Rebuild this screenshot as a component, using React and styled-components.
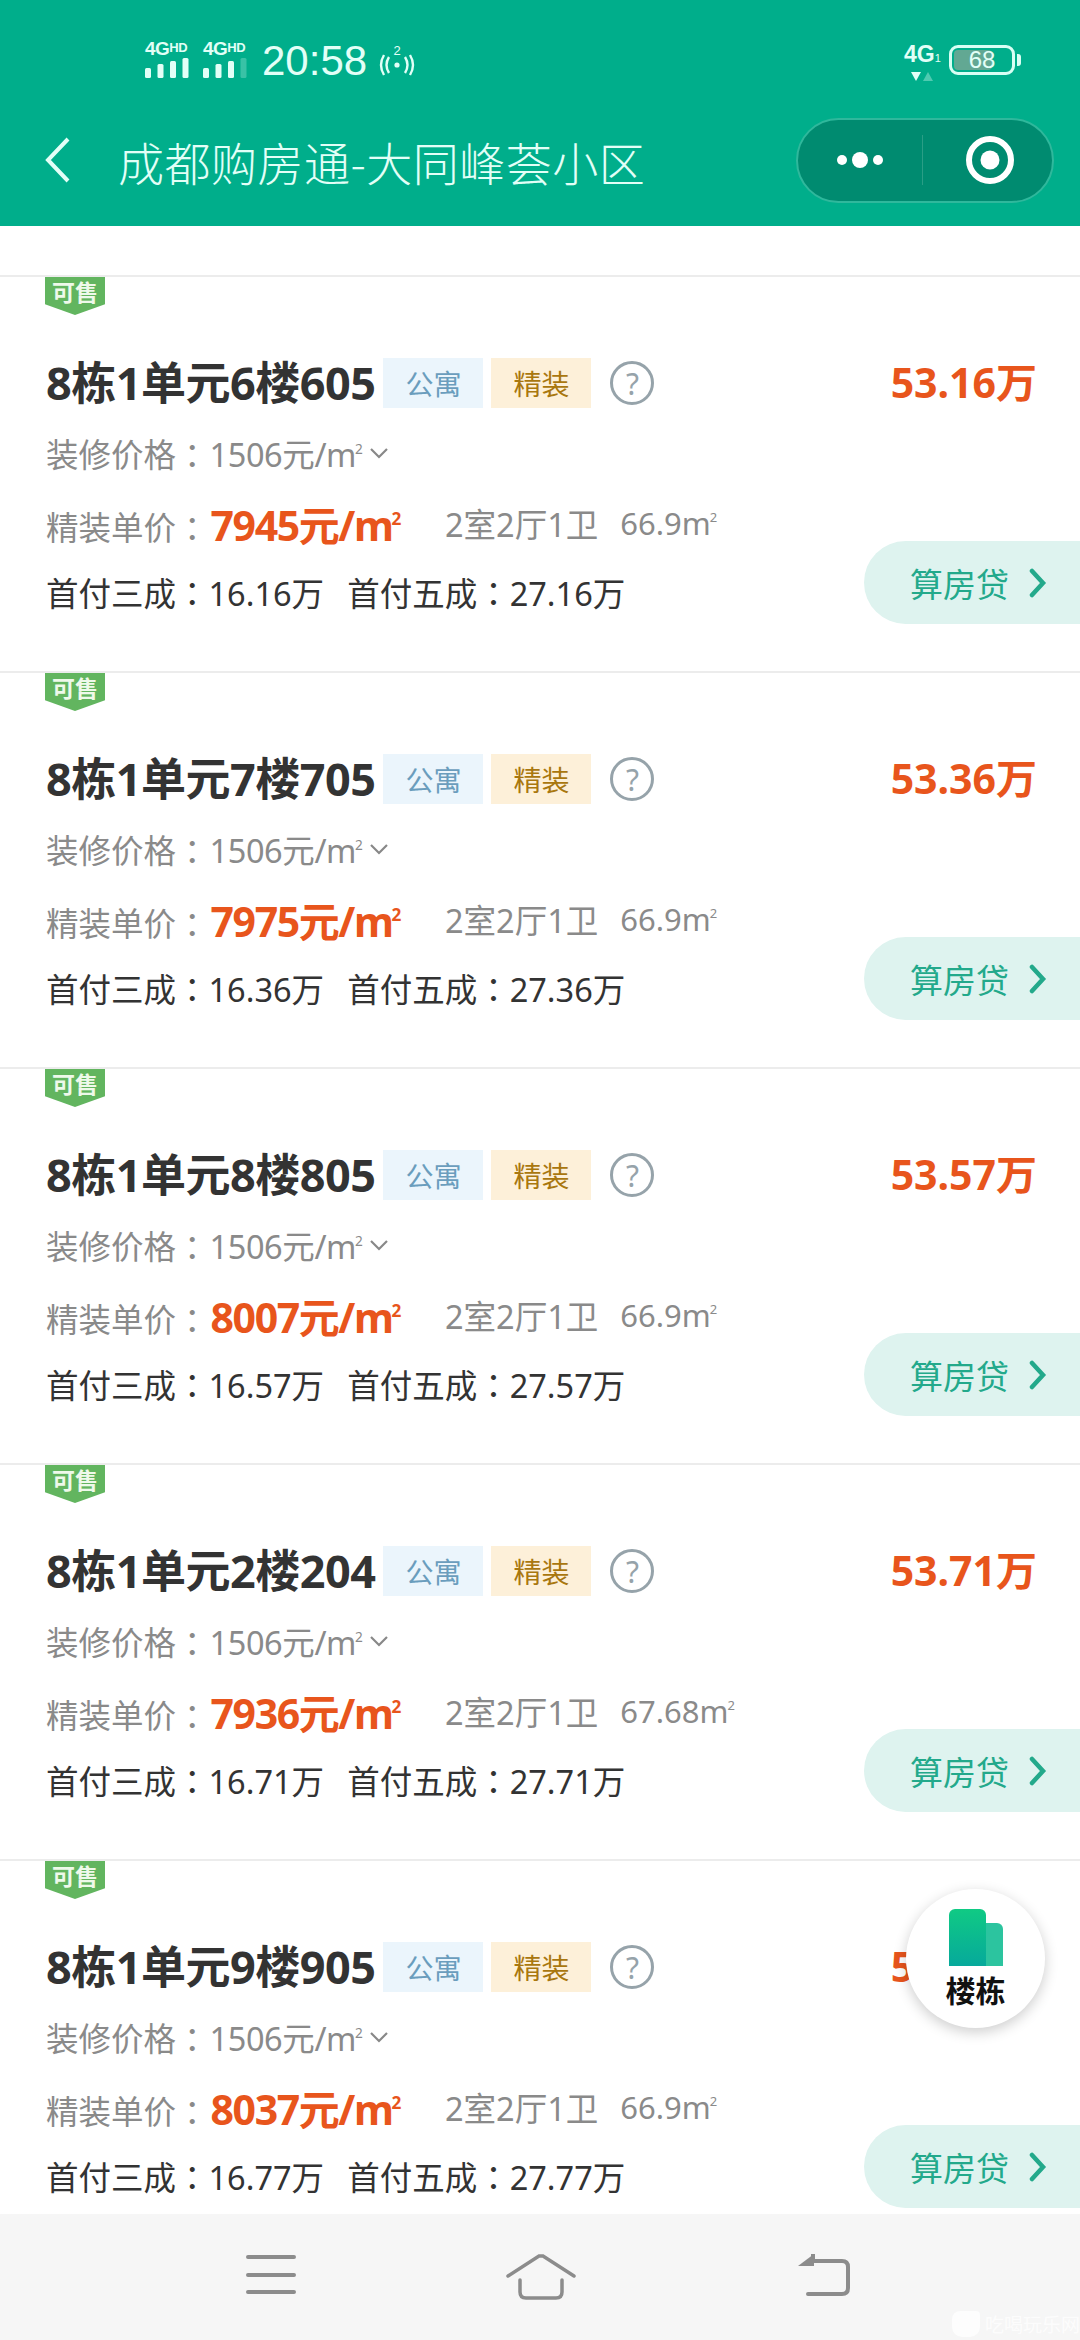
import React from 'react'
import styled, { createGlobalStyle } from 'styled-components'

const houses = [
  { name: '8栋1单元6楼605', total: '53.16万', unit: '7945', area: '66.9', three: '16.16', five: '27.16' },
  { name: '8栋1单元7楼705', total: '53.36万', unit: '7975', area: '66.9', three: '16.36', five: '27.36' },
  { name: '8栋1单元8楼805', total: '53.57万', unit: '8007', area: '66.9', three: '16.57', five: '27.57' },
  { name: '8栋1单元2楼204', total: '53.71万', unit: '7936', area: '67.68', three: '16.71', five: '27.71' },
  { name: '8栋1单元9楼905', total: '53.77万', unit: '8037', area: '66.9', three: '16.77', five: '27.77' },
]

const GlobalStyle = createGlobalStyle`
  html, body {
    margin: 0;
    padding: 0;
    background: #fff;
  }
  * {
    box-sizing: border-box;
  }
`

const Page = styled.div`
  position: relative;
  width: 1080px;
  height: 2340px;
  display: flex;
  flex-direction: column;
  overflow: hidden;
  background: #fff;
  font-family: "Noto Sans", "Noto Sans CJK SC", sans-serif;
`

const Header = styled.header`
  flex: none;
  height: 226px;
  background: #00ae8b;
  color: #e2fff7;
`

const StatusBar = styled.div`
  height: 112px;
  padding: 41px 65px 0 145px;
  display: flex;
  align-items: flex-start;
`

const SimCell = styled.div`
  width: 58px;
  display: flex;
  flex-direction: column;
  gap: 1px;
`

const SimLabel = styled.div`
  font: 800 19px/14px "Liberation Sans", sans-serif;
  letter-spacing: -0.5px;
  white-space: nowrap;
  small {
    font-size: 13px;
    vertical-align: 3px;
  }
`

const Clock = styled.div`
  margin: 2px 0 0 1px;
  font: 400 42px/36px "Liberation Sans", sans-serif;
`

const Hotspot = styled.svg`
  width: 36px;
  height: 32px;
  margin: 3px 0 0 12px;
`

const StatusRight = styled.div`
  margin-left: auto;
  display: flex;
  align-items: flex-start;
  margin-top: 4px;
`

const DataCell = styled.div`
  width: 45px;
  font: 700 23px/18px "Liberation Sans", sans-serif;
  white-space: nowrap;
  small {
    font-size: 11px;
    font-weight: 400;
  }
`

const Arrows = styled.svg`
  display: block;
  width: 22px;
  height: 10px;
  margin: 4px 0 0 7px;
`

const Battery = styled.div`
  position: relative;
  width: 66px;
  height: 30px;
  border: 3px solid #d8fff4;
  border-radius: 9px;
  padding: 2px;
  display: flex;
  &::after {
    content: '';
    position: absolute;
    right: -9px;
    top: 6px;
    width: 4px;
    height: 12px;
    border-radius: 0 3px 3px 0;
    background: #d8fff4;
  }
`

const BatteryFill = styled.div`
  width: 68%;
  background: #62a893;
  border-radius: 4px;
`

const BatteryText = styled.div`
  position: absolute;
  inset: 0;
  display: flex;
  align-items: center;
  justify-content: center;
  font: 400 24px/1 "Liberation Sans", sans-serif;
`

const NavBar = styled.div`
  height: 96px;
  padding: 0 26px 0 44px;
  display: flex;
  align-items: center;
`

const BackIcon = styled.svg`
  flex: none;
  width: 28px;
  height: 46px;
`

const Title = styled.h1`
  margin: 2px 0 0 46px;
  font-size: 46px;
  font-weight: 300;
  font-family: "Noto Sans CJK SC", sans-serif;
  line-height: 60px;
  letter-spacing: 0.5px;
  white-space: nowrap;
`

const Capsule = styled.div`
  margin-left: auto;
  width: 258px;
  height: 85px;
  display: flex;
  align-items: center;
  border: 2px solid #2fb89c;
  border-radius: 43px;
  background: #008b70;
`

const CapsulePart = styled.div`
  flex: 1;
  height: 100%;
  padding-left: ${(p) => p.$inset || 0}px;
  display: flex;
  align-items: center;
  justify-content: center;
`

const CapsuleLine = styled.div`
  width: 1px;
  height: 50px;
  background: #2a9e86;
`

const List = styled.main`
  flex: 1;
  min-height: 0;
  padding-top: 49px;
  overflow: hidden;
`

const Card = styled.section`
  height: 396px;
  display: flex;
  justify-content: space-between;
  border-top: 2px solid #ececec;
`

const Info = styled.div`
  display: flex;
  flex-direction: column;
  padding-left: 46px;
`

const SaleBadge = styled.div`
  width: 60px;
  height: 38px;
  margin-left: -1px;
  padding-top: 2px;
  background: #62b55f;
  color: #eef9ea;
  font-size: 23px;
  font-weight: 700;
  line-height: 26px;
  text-align: center;
  clip-path: polygon(0 0, 100% 0, 100% 72%, 50% 100%, 0 72%);
`

const NameRow = styled.div`
  height: 50px;
  margin-top: 43px;
  display: flex;
  align-items: center;
`

const Name = styled.h2`
  margin: 0 8px 6px 0;
  font-size: 45px;
  font-weight: 700;
  color: #333;
  white-space: nowrap;
  letter-spacing: -0.5px;
`

const Tag = styled.span`
  width: 100px;
  height: 50px;
  margin-right: 8px;
  display: flex;
  align-items: center;
  justify-content: center;
  font-size: 28px;
  color: ${(p) => (p.$warm ? '#a9770f' : '#6a9dbd')};
  background: ${(p) => (p.$warm ? '#fdf0d9' : '#ebf5fc')};
`

const Help = styled.span`
  width: 44px;
  height: 44px;
  margin-left: 11px;
  display: flex;
  align-items: center;
  justify-content: center;
  border: 3px solid #96a3aa;
  border-radius: 50%;
  color: #96a3aa;
  font-size: 30px;
  font-weight: 400;
`

const Row = styled.div`
  height: 50px;
  margin-top: ${(p) => p.$gap}px;
  display: flex;
  align-items: center;
  font-size: 32.5px;
  white-space: nowrap;
  color: ${(p) => p.$color || '#8a8a8a'};
`

const Colon = styled.span`
  font-family: "Noto Sans CJK TC", sans-serif;
`

const FitOut = styled.span`
  margin-left: 1px;
  letter-spacing: -0.4px;
`

const Sup = styled.sup`
  font-size: 0.42em;
  line-height: 0;
  vertical-align: 0.95em;
  margin-left: -1px;
`

const Chevron = styled.svg`
  width: 22px;
  height: 14px;
  margin-left: 5px;
`

const UnitPrice = styled.span`
  margin: -6px 0 0 2px;
  font-size: 41px;
  font-weight: 700;
  color: #e8551c;
  letter-spacing: -1.4px;
`

const Layout = styled.span`
  margin-left: 45px;
  margin-top: -7px;
  font-size: 32.5px;
`

const Area = styled.span`
  margin-left: 22px;
  margin-top: -7px;
  font-size: 31px;
`

const DownPay = styled.span`
  margin-right: 23px;
`

const Side = styled.div`
  display: flex;
  flex-direction: column;
  align-items: flex-end;
`

const Total = styled.div`
  height: 50px;
  margin: 78px 43px 0 0;
  display: flex;
  align-items: center;
  font-size: 41px;
  font-weight: 700;
  color: #e8551c;
`

const LoanButton = styled.button`
  width: 216px;
  height: 83px;
  margin-top: 136px;
  padding: 0 0 0 46px;
  display: flex;
  align-items: center;
  border: 0;
  border-radius: 42px 0 0 42px;
  background: #def3ef;
  color: #23a98b;
  font: 400 33px "Noto Sans", "Noto Sans CJK SC", sans-serif;
`

const LoanArrow = styled.svg`
  width: 18px;
  height: 30px;
  margin-left: 20px;
`

const BuildingButton = styled.button`
  position: absolute;
  left: 906px;
  top: 1889px;
  width: 139px;
  height: 139px;
  padding: 20px 0 0;
  display: flex;
  flex-direction: column;
  align-items: center;
  gap: 4px;
  border: 0;
  border-radius: 50%;
  background: #fff;
  box-shadow: 0 4px 14px rgba(0, 0, 0, 0.2);
  color: #111;
  font: 700 30px/38px "Noto Sans CJK SC", sans-serif;
`

const BottomNav = styled.nav`
  position: relative;
  flex: none;
  height: 126px;
  padding-left: 246px;
  display: flex;
  align-items: flex-start;
  background: #f6f6f6;
`

const NavIcon = styled.svg`
  margin-top: 40px;
  margin-right: ${(p) => p.$gap}px;
`

const Watermark = styled.div`
  position: absolute;
  right: 0;
  bottom: 2px;
  display: flex;
  align-items: center;
  gap: 5px;
  color: rgba(255, 255, 255, 0.75);
  font-size: 19px;
  white-space: nowrap;
`

const WatermarkLogo = styled.span`
  width: 28px;
  height: 26px;
  border-radius: 8px 4px 10px 10px;
  background: rgba(255, 255, 255, 0.75);
`

const Signal = ({ level }) => (
  <svg width="46" height="21" viewBox="0 0 46 21">
    {[10, 14, 17, 20].map((h, i) => (
      <rect
        key={i}
        x={i * 12.5}
        y={21 - h}
        width="6"
        height={h}
        rx="1.5"
        fill="#e2fff7"
        opacity={i < level ? 1 : 0.25}
      />
    ))}
  </svg>
)

const Square = () => (
  <>
    m<Sup>2</Sup>
  </>
)

const House = ({ item }) => (
  <Card>
    <Info>
      <SaleBadge>可售</SaleBadge>
      <NameRow>
        <Name>{item.name}</Name>
        <Tag>公寓</Tag>
        <Tag $warm>精装</Tag>
        <Help>?</Help>
      </NameRow>
      <Row $gap={20}>
        装修价格<Colon>：</Colon>
        <FitOut>1506元/<Square /></FitOut>
        <Chevron viewBox="0 0 22 14">
          <path d="M3 3l8 8 8-8" fill="none" stroke="#888" strokeWidth="2.2" />
        </Chevron>
      </Row>
      <Row $gap={23}>
        精装单价<Colon>：</Colon>
        <UnitPrice>
          {item.unit}元/<Square />
        </UnitPrice>
        <Layout>2室2厅1卫</Layout>
        <Area>
          {item.area}
          <Square />
        </Area>
      </Row>
      <Row $gap={16} $color="#333">
        <DownPay>首付三成<Colon>：</Colon>{item.three}万</DownPay>
        <span>首付五成<Colon>：</Colon>{item.five}万</span>
      </Row>
    </Info>
    <Side>
      <Total>{item.total}</Total>
      <LoanButton>
        算房贷
        <LoanArrow viewBox="0 0 18 30">
          <path d="M3 3l11 12L3 27" fill="none" stroke="#23a98b" strokeWidth="4.5" strokeLinecap="round" />
        </LoanArrow>
      </LoanButton>
    </Side>
  </Card>
)

const App = () => (
  <Page>
    <GlobalStyle />
    <Header>
      <StatusBar>
        <SimCell>
          <SimLabel>4G<small>HD</small></SimLabel>
          <Signal level={4} />
        </SimCell>
        <SimCell>
          <SimLabel>4G<small>HD</small></SimLabel>
          <Signal level={3} />
        </SimCell>
        <Clock>20:58</Clock>
        <Hotspot viewBox="0 0 36 32">
          <circle cx="18" cy="21" r="2.6" fill="#e2fff7" />
          <path d="M10 13q-5 8 0 16M26 13q5 8 0 16M5 11q-6 10 0 20M31 11q6 10 0 20" fill="none" stroke="#e2fff7" strokeWidth="2.4" />
          <text x="18" y="11" fontSize="13" fill="#e2fff7" textAnchor="middle" fontFamily="Liberation Sans">2</text>
        </Hotspot>
        <StatusRight>
          <DataCell>
            4G<small>1</small>
            <Arrows viewBox="0 0 22 10">
              <path d="M0 1h10L5 10z" fill="#e2fff7" />
              <path d="M12 10h10L17 1z" fill="#e2fff7" opacity="0.35" />
            </Arrows>
          </DataCell>
          <Battery>
            <BatteryFill />
            <BatteryText>68</BatteryText>
          </Battery>
        </StatusRight>
      </StatusBar>
      <NavBar>
        <BackIcon viewBox="0 0 28 46">
          <path d="M24 2L4 23l20 21" fill="none" stroke="#e2fff7" strokeWidth="4" />
        </BackIcon>
        <Title>成都购房通-大同峰荟小区</Title>
        <Capsule>
          <CapsulePart>
            <svg width="50" height="20" viewBox="0 0 50 20">
              <circle cx="7" cy="10" r="5" fill="#fff" />
              <circle cx="25" cy="10" r="8" fill="#fff" />
              <circle cx="43" cy="10" r="5" fill="#fff" />
            </svg>
          </CapsulePart>
          <CapsuleLine />
          <CapsulePart $inset={6}>
            <svg width="50" height="50" viewBox="0 0 50 50">
              <circle cx="25" cy="25" r="21" fill="none" stroke="#fff" strokeWidth="6" />
              <circle cx="25" cy="25" r="9.5" fill="#fff" />
            </svg>
          </CapsulePart>
        </Capsule>
      </NavBar>
    </Header>
    <List>
      {houses.map((item) => (
        <House key={item.name} item={item} />
      ))}
    </List>
    <BuildingButton>
      <svg width="54" height="57" viewBox="0 0 54 57">
        <defs>
          <linearGradient id="tower" x1="0" y1="0" x2="0" y2="1">
            <stop offset="0" stopColor="#10ca84" />
            <stop offset="1" stopColor="#06a99b" />
          </linearGradient>
        </defs>
        <path d="M36 14h12a6 6 0 0 1 6 6v37H36z" fill="#2cc49f" />
        <path d="M6 0h25a6 6 0 0 1 6 6v51H0V6a6 6 0 0 1 6-6z" fill="url(#tower)" />
      </svg>
      楼栋
    </BuildingButton>
    <BottomNav>
      <NavIcon $gap={210} width="50" height="42" viewBox="0 0 50 42">
        <path d="M2 3h46M2 21h46M2 38h46" stroke="#8c8c8c" strokeWidth="4" strokeLinecap="round" />
      </NavIcon>
      <NavIcon $gap={222} width="70" height="46" viewBox="0 0 70 46">
        <path d="M2 22L33 2h4l31 20" fill="none" stroke="#8c8c8c" strokeWidth="3.5" strokeLinecap="round" />
        <path d="M14 26v12q0 6 6 6h30q6 0 6-6V26" fill="none" stroke="#8c8c8c" strokeWidth="3.5" strokeLinecap="round" />
      </NavIcon>
      <NavIcon $gap={0} width="52" height="42" viewBox="0 0 52 42">
        <path d="M15 0v7h29q6 0 6 6v21q0 6-6 6H10" fill="none" stroke="#8c8c8c" strokeWidth="4" strokeLinecap="round" />
        <path d="M16 0v12H0z" fill="#8c8c8c" />
      </NavIcon>
      <Watermark>
        <WatermarkLogo />
        吃喝玩乐网
      </Watermark>
    </BottomNav>
  </Page>
)

export default App
